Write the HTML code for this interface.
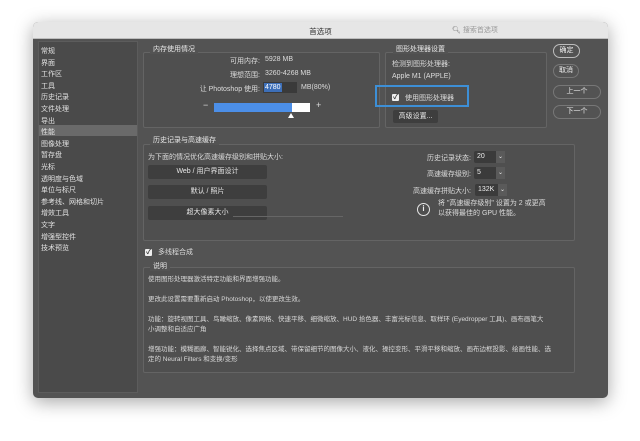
<!DOCTYPE html><html><head><meta charset="utf-8"><style>
*{margin:0;padding:0;box-sizing:border-box}
body{width:640px;height:441px;background:#fff;position:relative;overflow:hidden;font-family:"Liberation Sans","Noto Sans CJK SC",sans-serif;font-size:7px;color:#dcdcdc}
.a{position:absolute;white-space:nowrap}
.win{position:absolute;left:33px;top:22px;width:575px;height:376px;background:#535353;border-radius:5px;box-shadow:0 4px 18px rgba(0,0,0,.35);overflow:hidden}
.tb{position:absolute;left:0;top:0;width:575px;height:17px;background:#e6e6e6;border-bottom:1px solid #bdbdbd}
.grp{position:absolute;border:1px solid #646464;background:#4f4f4f;border-radius:2px}
.h{position:absolute;background:#535353;padding:0 3px;color:#e8e8e8}
.btn{position:absolute;background:#3e3e3e;color:#e8e8e8;text-align:center;line-height:13px;border-radius:2px}
.pill{position:absolute;border:1px solid #bcbcbc;border-radius:8px;text-align:center;color:#eee;font-size:7px}
.sel{position:absolute;background:#3b3b3b;height:12px;line-height:12px;padding-left:3px;color:#eee;border-radius:2px}
.sel i{position:absolute;right:0;top:0;width:9px;height:12px;background:#5a5a5a;font-style:normal;font-size:6px;text-align:center}
.cb{position:absolute;width:7px;height:7px;background:#eee;border-radius:1px;color:#333;font-size:7px;line-height:7px;text-align:center;font-weight:bold}
</style></head><body>
<div class="win">
<div class="tb"><div class="a" style="left:0;width:575px;text-align:center;top:4px;color:#333;font-size:7.5px">首选项</div>
<div class="a" style="left:419px;top:3px;color:#777;font-size:7px">&#x1F50D;&#xFE0E; <span style="color:#999">搜索首选项</span></div></div>
<div class="a" style="left:5px;top:19px;width:100px;height:352px;background:#4a4a4a;border:1px solid #5c5c5c"></div>
<div class="a" style="left:6px;top:103px;width:98px;height:11px;background:#6a6a6a"></div>
<div class="a" style="left:8px;top:24px;line-height:11.6px;color:#e2e2e2">常规<br>界面<br>工作区<br>工具<br>历史记录<br>文件处理<br>导出<br>性能<br>图像处理<br>暂存盘<br>光标<br>透明度与色域<br>单位与标尺<br>参考线、网格和切片<br>增效工具<br>文字<br>增强型控件<br>技术预览</div>
<!-- memory -->
<div class="grp" style="left:110px;top:30px;width:237px;height:76px"></div>
<div class="h" style="left:117px;top:22px">内存使用情况</div>
<div class="a" style="left:120px;width:107px;text-align:right;top:34px">可用内存:</div><div class="a" style="left:232px;top:34px">5928 MB</div>
<div class="a" style="left:120px;width:107px;text-align:right;top:48px">理想范围:</div><div class="a" style="left:232px;top:48px">3260-4268 MB</div>
<div class="a" style="left:120px;width:107px;text-align:right;top:62px">让 Photoshop 使用:</div>
<div class="a" style="left:230px;top:60px;width:34px;height:11px;background:#3a3a3a"></div>
<div class="a" style="left:231px;top:61px;background:#3d6fb8;color:#fff;padding:0 1px;line-height:9px">4780</div>
<div class="a" style="left:268px;top:62px">MB(80%)</div>
<div class="a" style="left:170px;top:78px;font-size:9px">−</div>
<div class="a" style="left:181px;top:81px;width:96px;height:9px;background:#fff"></div>
<div class="a" style="left:181px;top:81px;width:78px;height:9px;background:#4c8fe8"></div>
<div class="a" style="left:255px;top:91px;width:0;height:0;border-left:3px solid transparent;border-right:3px solid transparent;border-bottom:5px solid #fff"></div>
<div class="a" style="left:283px;top:78px;font-size:9px">+</div>
<!-- gpu -->
<div class="grp" style="left:352px;top:30px;width:162px;height:76px"></div>
<div class="h" style="left:360px;top:22px">图形处理器设置</div>
<div class="a" style="left:359px;top:37px">检测到图形处理器:</div>
<div class="a" style="left:359px;top:51px">Apple M1 (APPLE)</div>
<div class="a" style="left:342px;top:63px;width:94px;height:22px;border:2px solid #3d8fd6"></div>
<div class="cb" style="left:359px;top:72px">✓</div>
<div class="a" style="left:372px;top:71px">使用图形处理器</div>
<div class="btn" style="left:360px;top:88px;width:45px;height:13px">高级设置...</div>
<!-- buttons -->
<div class="pill" style="left:520px;top:22px;width:27px;height:14px;line-height:12px;border-width:1.5px">确定</div>
<div class="pill" style="left:520px;top:42px;width:26px;height:14px;line-height:12px;border-color:#777">取消</div>
<div class="pill" style="left:520px;top:63px;width:48px;height:14px;line-height:12px;border-color:#777">上一个</div>
<div class="pill" style="left:520px;top:83px;width:48px;height:14px;line-height:12px;border-color:#777">下一个</div>
<!-- history -->
<div class="grp" style="left:110px;top:122px;width:432px;height:97px"></div>
<div class="h" style="left:117px;top:113px">历史记录与高速缓存</div>
<div class="a" style="left:115px;top:130px">为下面的情况优化高速缓存级别和拼贴大小:</div>
<div class="btn" style="left:115px;top:143px;width:119px;height:14px">Web / 用户界面设计</div>
<div class="btn" style="left:115px;top:163px;width:119px;height:14px">默认 / 照片</div>
<div class="btn" style="left:115px;top:184px;width:119px;height:14px">超大像素大小</div>
<div class="a" style="left:200px;top:194px;width:110px;height:1px;background:#666"></div>
<div class="a" style="left:340px;width:98px;text-align:right;top:131px">历史记录状态:</div>
<div class="sel" style="left:441px;top:129px;width:31px">20<i>⌄</i></div>
<div class="a" style="left:340px;width:98px;text-align:right;top:147px">高速缓存级别:</div>
<div class="sel" style="left:441px;top:145px;width:31px">5<i>⌄</i></div>
<div class="a" style="left:340px;width:98px;text-align:right;top:164px">高速缓存拼贴大小:</div>
<div class="sel" style="left:442px;top:162px;width:32px">132K<i>⌄</i></div>
<div class="a" style="left:384px;top:181px;width:13px;height:13px;border:1.3px solid #e6e6e6;border-radius:50%;text-align:center;line-height:10px;font-weight:bold;font-size:8px;color:#eee">i</div>
<div class="a" style="left:405px;top:177px;line-height:10px">将 "高速缓存级别" 设置为 2 或更高<br>以获得最佳的 GPU 性能。</div>
<!-- multithread -->
<div class="cb" style="left:112px;top:227px">✓</div>
<div class="a" style="left:125px;top:225px">多线程合成</div>
<!-- desc -->
<div class="grp" style="left:110px;top:245px;width:432px;height:106px"></div>
<div class="h" style="left:117px;top:239px">说明</div>
<div class="a" style="left:115px;top:253px;line-height:10px;color:#d8d8d8;font-size:6.5px">使用图形处理器激活特定功能和界面增强功能。<br><br style="line-height:7px">更改此设置需要重新启动 Photoshop，以使更改生效。<br><br style="line-height:7px">功能：旋转视图工具、鸟瞰缩放、像素网格、快速平移、细微缩放、HUD 拾色器、丰富光标信息、取样环 (Eyedropper 工具)、画布画笔大<br>小调整和自适应广角<br><br style="line-height:7px">增强功能：模糊画廊、智能锐化、选择焦点区域、带保留细节的图像大小、液化、操控变形、平滑平移和缩放、画布边框投影、绘画性能、选<br>定的 Neural Filters 和变换/变形</div>
</div>
</body></html>
